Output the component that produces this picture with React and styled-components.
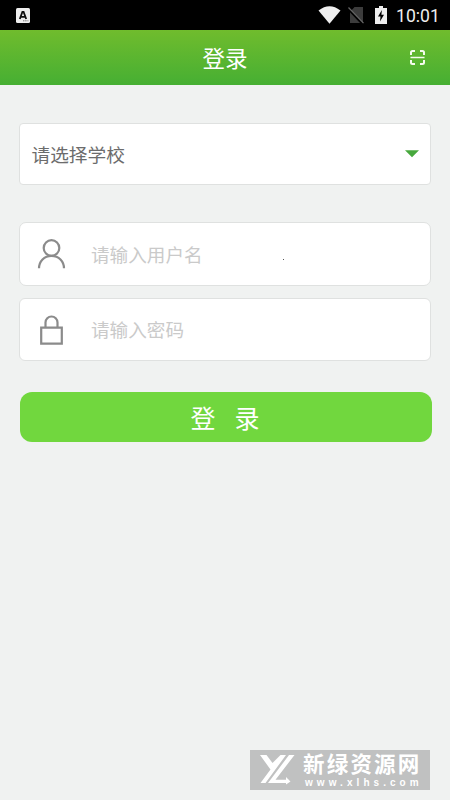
import React from 'react';
import styled, { createGlobalStyle } from 'styled-components';

const GlobalStyle = createGlobalStyle`
  * { box-sizing: border-box; }
  body { margin: 0; background: #f0f2f1; }
`;

const Screen = styled.div`
  position: relative;
  display: flex;
  flex-direction: column;
  width: 450px;
  height: 800px;
  overflow: hidden;
  background: #f0f2f1;
  font-family: Roboto, "Noto Sans CJK SC", sans-serif;
  svg { display: block; flex: none; }
`;

const StatusBar = styled.div`
  display: flex;
  align-items: center;
  flex: none;
  height: 30px;
  padding: 0 11px 0 16px;
  background: #000;
`;

const StatusIcons = styled.div`
  display: flex;
  align-items: center;
  margin-left: auto;
`;

const SimSlot = styled.div`
  margin: 0 10px 0 7px;
`;

const Clock = styled.span`
  width: 43px;
  margin-left: 9px;
  font-size: 17.6px;
  line-height: 30px;
  padding-top: 2px;
  color: #eee;
  white-space: nowrap;
`;

const Header = styled.header`
  display: grid;
  grid-template-columns: 1fr auto 1fr;
  align-items: center;
  flex: none;
  height: 55px;
  padding-right: 24px;
  background: linear-gradient(#70bc2d, #46af33);
`;

const Title = styled.h1`
  grid-column: 2;
  margin: 2px -24px 0 0;
  font-size: 22.5px;
  line-height: 32px;
  font-weight: 400;
  color: #fff;
`;

const ScanSlot = styled.div`
  display: flex;
  justify-content: flex-end;
`;

const Form = styled.main`
  display: flex;
  flex-direction: column;
  padding: 38px 19px 0;
`;

const Box = styled.div`
  display: flex;
  align-items: center;
  height: ${(p) => p.$height}px;
  border: 1px solid #dfe1e0;
  border-radius: ${(p) => p.$radius}px;
  background: #fff;
`;

const SchoolSelect = styled(Box)`
  justify-content: space-between;
  margin-bottom: 37px;
  padding: 0 11.5px 0 11.5px;
`;

const Field = styled(Box)`
  margin-bottom: 12px;
  padding-left: 16px;
`;

const SelectLabel = styled.span`
  padding-top: 3px;
  font-size: 18.7px;
  line-height: 28px;
  color: #6c6c6c;
`;

const Placeholder = styled.span`
  width: 192px;
  margin-left: 24px;
  padding-top: 3px;
  font-size: 18.6px;
  line-height: 28px;
  color: #cacaca;
`;

const Dot = styled.i`
  width: 1px;
  height: 1px;
  margin-top: 10px;
  background: #555;
`;

const SubmitButton = styled.button`
  display: flex;
  align-items: center;
  justify-content: center;
  gap: 19px;
  width: 412px;
  height: 50px;
  margin: 19px 0 0 1px;
  padding: 5px 2px 0 0;
  border: 0;
  border-radius: 12px;
  background: #71d73e;
  color: #fff;
  font-family: inherit;
  font-size: 25px;
  line-height: 36px;
`;

const Watermark = styled.aside`
  position: absolute;
  left: 250px;
  top: 750px;
  display: flex;
  width: 180px;
  height: 40px;
  padding-left: 9px;
  background: #c0c1c1;
  color: #fff;
`;

const WatermarkText = styled.div`
  display: flex;
  flex-direction: column;
  margin-left: 7px;
  padding-top: 3px;
`;

const SiteName = styled.span`
  font-size: 21.5px;
  font-weight: 700;
  line-height: 24px;
  letter-spacing: 2.2px;
  white-space: nowrap;
`;

const SiteUrl = styled.span`
  font-family: "Liberation Sans", sans-serif;
  font-size: 10px;
  font-weight: 700;
  line-height: 12px;
  letter-spacing: 4.050px;
  padding-left: 2px;
  white-space: nowrap;
`;

const InputMethodIcon = () => (
  <svg width="14" height="15" viewBox="0 0 14 15">
    <rect width="14" height="15" rx="1.5" fill="#eee" />
    <path d="M3.8 11 6.4 4h1.2l2.6 7M4.8 8.8h4.4" fill="none" stroke="#111" strokeWidth="1.8" />
    <path d="M7 12.8h5.5" stroke="#777" strokeWidth="1" strokeDasharray="1.2 .5" />
  </svg>
);

const WifiIcon = () => (
  <svg width="23" height="18" viewBox="0 0 23 18">
    <path d="M.5 4.5Q11.5-4 22.5 4.5L11.5 17.7Z" fill="#eee" />
  </svg>
);

const NoSimIcon = () => (
  <svg width="17" height="18" viewBox="0 0 17 18">
    <path d="M6.5 1H15v16H2V6Z" fill="#3c3c3c" />
    <path d="M0 2.6 14.5 18" stroke="#000" strokeWidth="2.2" />
    <path d="M.5 1.5 15.5 17.2" stroke="#666" strokeWidth="1.2" />
  </svg>
);

const BatteryIcon = () => (
  <svg width="12" height="18" viewBox="0 0 12 18">
    <path d="M4 0h4v2h4v16H0V2h4Z" fill="#eee" />
    <path d="M6.9 4 3 10.6h2.5L5 15.5 9 8.8H6.4Z" fill="#000" />
  </svg>
);

const ScanIcon = () => (
  <svg width="17" height="17" viewBox="0 0 17 17" fill="none" stroke="#f4fbee" strokeWidth="2">
    <path d="M2 6V3.5Q2 2 3.5 2H6M11 2h2.5Q15 2 15 3.5V6M15 11v2.5q0 1.5-1.5 1.5H11M6 15H3.5Q2 15 2 13.5V11" />
    <path d="M1.5 8.5h14" strokeWidth="1.5" />
  </svg>
);

const UserIcon = () => (
  <svg width="31" height="32" viewBox="0 0 31 32" fill="none" stroke="#8b8b8b" strokeWidth="2.2">
    <circle cx="15.5" cy="10" r="7.8" />
    <path d="M3 30.3c0-7 5.2-12.5 12.5-12.5S28 23.3 28 30.3" />
  </svg>
);

const LockIcon = () => (
  <svg width="31" height="32" viewBox="0 0 31 32" fill="none" stroke="#8b8b8b" strokeWidth="2.2">
    <path d="M5.2 13.7h20.6v16H5.2ZM9.5 13V8.5a6 6 0 0 1 12 0V13" />
  </svg>
);

const CaretIcon = () => (
  <svg width="14" height="8" viewBox="0 0 14 8">
    <path d="M0 .2h14L7 7.2Z" fill="#47a83d" />
  </svg>
);

const SiteLogo = () => (
  <svg width="37" height="40" viewBox="0 0 37 40" fill="#fff">
    <path d="M1 5h6.500l6 8L21.500 5H27L6.500 33H1.500L11.500 19.500Z" />
    <path d="M30 5h5.500L16.500 29.800h10.500V27l4.500 4.500-4.500 3V33H9Z" />
  </svg>
);

export default function App() {
  return (
    <Screen>
      <GlobalStyle />
      <StatusBar>
        <InputMethodIcon />
        <StatusIcons>
          <WifiIcon />
          <SimSlot><NoSimIcon /></SimSlot>
          <BatteryIcon />
          <Clock>10:01</Clock>
        </StatusIcons>
      </StatusBar>
      <Header>
        <Title>登录</Title>
        <ScanSlot><ScanIcon /></ScanSlot>
      </Header>
      <Form>
        <SchoolSelect $height={62} $radius={4}>
          <SelectLabel>请选择学校</SelectLabel>
          <CaretIcon />
        </SchoolSelect>
        <Field $height={64} $radius={7}>
          <UserIcon />
          <Placeholder>请输入用户名</Placeholder>
          <Dot />
        </Field>
        <Field $height={63} $radius={6}>
          <LockIcon />
          <Placeholder>请输入密码</Placeholder>
        </Field>
        <SubmitButton type="button">
          <span>登</span>
          <span>录</span>
        </SubmitButton>
      </Form>
      <Watermark>
        <SiteLogo />
        <WatermarkText>
          <SiteName>新绿资源网</SiteName>
          <SiteUrl>www.xlhs.com</SiteUrl>
        </WatermarkText>
      </Watermark>
    </Screen>
  );
}
